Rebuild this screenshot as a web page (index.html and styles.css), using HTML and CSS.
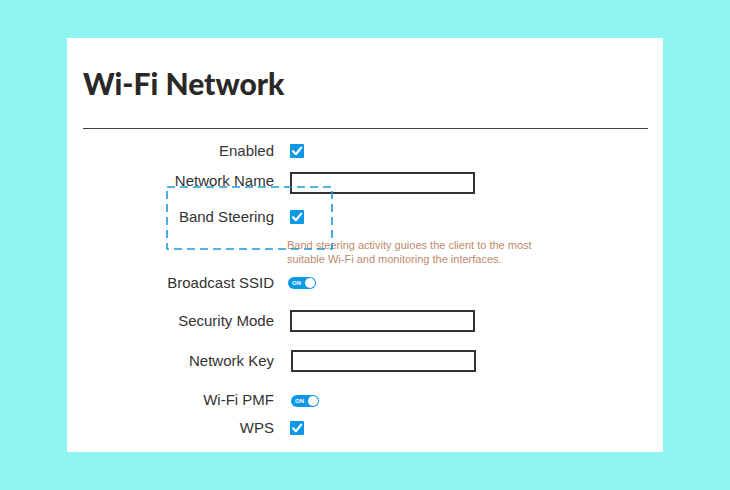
FILE: index.html
```html
<!DOCTYPE html>
<html>
<head>
<meta charset="utf-8">
<link rel="stylesheet" href="styles.css">
</head>
<body>
<div class="card">
  <h1 class="title">Wi-Fi Network</h1>
  <div class="rule"></div>
  <div class="form">
    <div class="row r1">
      <span class="label">Enabled</span>
      <span class="check"><svg viewBox="0 0 14 14" width="14" height="14"><path d="M3 7.2 L5.9 10.2 L11.2 3.6" fill="none" stroke="#fff" stroke-width="2.2" stroke-linecap="round" stroke-linejoin="round"/></svg></span>
    </div>
    <div class="row r2">
      <span class="label">Network Name</span>
      <span class="input in-name"></span>
    </div>
    <div class="row r3">
      <span class="label">Band Steering</span>
      <span class="check"><svg viewBox="0 0 14 14" width="14" height="14"><path d="M3 7.2 L5.9 10.2 L11.2 3.6" fill="none" stroke="#fff" stroke-width="2.2" stroke-linecap="round" stroke-linejoin="round"/></svg></span>
    </div>
    <p class="help">Band steering activity guioes the client to the most<br>suitable Wi-Fi and monitoring the interfaces.</p>
    <div class="row r4">
      <span class="label">Broadcast SSID</span>
      <span class="toggle t1"><span class="on">ON</span><span class="knob"></span></span>
    </div>
    <div class="row r5">
      <span class="label">Security Mode</span>
      <span class="input in-sec"></span>
    </div>
    <div class="row r6">
      <span class="label">Network Key</span>
      <span class="input in-key"></span>
    </div>
    <div class="row r7">
      <span class="label">Wi-Fi PMF</span>
      <span class="toggle t2"><span class="on">ON</span><span class="knob"></span></span>
    </div>
    <div class="row r8">
      <span class="label">WPS</span>
      <span class="check"><svg viewBox="0 0 14 14" width="14" height="14"><path d="M3 7.2 L5.9 10.2 L11.2 3.6" fill="none" stroke="#fff" stroke-width="2.2" stroke-linecap="round" stroke-linejoin="round"/></svg></span>
    </div>
  </div>
  <svg class="highlight" width="168" height="65" viewBox="0 0 168 65"><rect x="1" y="1" width="165" height="62" fill="none" stroke="#1b9ad8" stroke-width="1.6" stroke-dasharray="8 5"/></svg>
</div>
</body>
</html>
```
FILE: styles.css
```css
html, body {
  margin: 0;
  padding: 0;
}
body {
  background: #8ff5f2;
  width: 730px;
  height: 490px;
  overflow: hidden;
  font-family: "Liberation Sans", Arial, sans-serif;
}
.card {
  position: relative;
  margin: 38px 0 0 67px;
  width: 596px;
  height: 414px;
  background: #fff;
  box-sizing: border-box;
  padding: 0 15px 0 16px;
}
.title {
  margin: 0;
  padding-top: 27px;
  height: 63px;
  box-sizing: border-box;
  font-family: "Lato", sans-serif;
  font-weight: 900;
  font-size: 30px;
  line-height: 36px;
  color: #2b2828;
  letter-spacing: 0;
}
.rule {
  margin-top: 27px;
  height: 1px;
  background: #444;
}
.form {
  padding-top: 9px;
}
.row {
  display: flex;
  align-items: center;
  height: 26px;
}
.label {
  width: 191px;
  text-align: right;
  font-size: 15px;
  color: #333;
  margin-right: 16px;
  white-space: nowrap;
  position: relative;
  top: -1px;
}
.check {
  width: 14px;
  height: 14px;
  background: #0b98e6;
  border-radius: 1px;
  display: block;
}
.check svg { display: block; }
.input {
  display: block;
  width: 185px;
  height: 22px;
  box-sizing: border-box;
  border: 2px solid #333;
  background: #fff;
}
.r2 { margin-top: 4px; }
.r2 .input { align-self: flex-end; }
.r3 { margin-top: 10px; }
.help {
  margin: 8px 0 0 204px;
  font-size: 11px;
  line-height: 14px;
  color: #bd8a6d;
}
.r4 { margin-top: 4px; }
.r4 .label { margin-right: 14px; }
.r5 { margin-top: 12px; }
.r6 { margin-top: 14px; }
.r6 .input { margin-left: 1px; }
.r7 { margin-top: 13px; }
.r7 .toggle { margin-left: 1px; margin-top: 2px; }
.r8 { margin-top: 2px; }
.toggle {
  display: flex;
  align-items: center;
  justify-content: space-between;
  width: 28px;
  height: 12px;
  border-radius: 6px;
  background: #0b98e6;
  box-sizing: border-box;
  padding: 0 1px 0 4px;
}
.on {
  font-size: 6px;
  font-weight: bold;
  color: #fff;
  line-height: 6px;
  letter-spacing: 0.2px;
}
.knob {
  width: 10px;
  height: 10px;
  border-radius: 50%;
  background: #fff;
}
.highlight {
  position: absolute;
  left: 99px;
  top: 148px;
}
```
